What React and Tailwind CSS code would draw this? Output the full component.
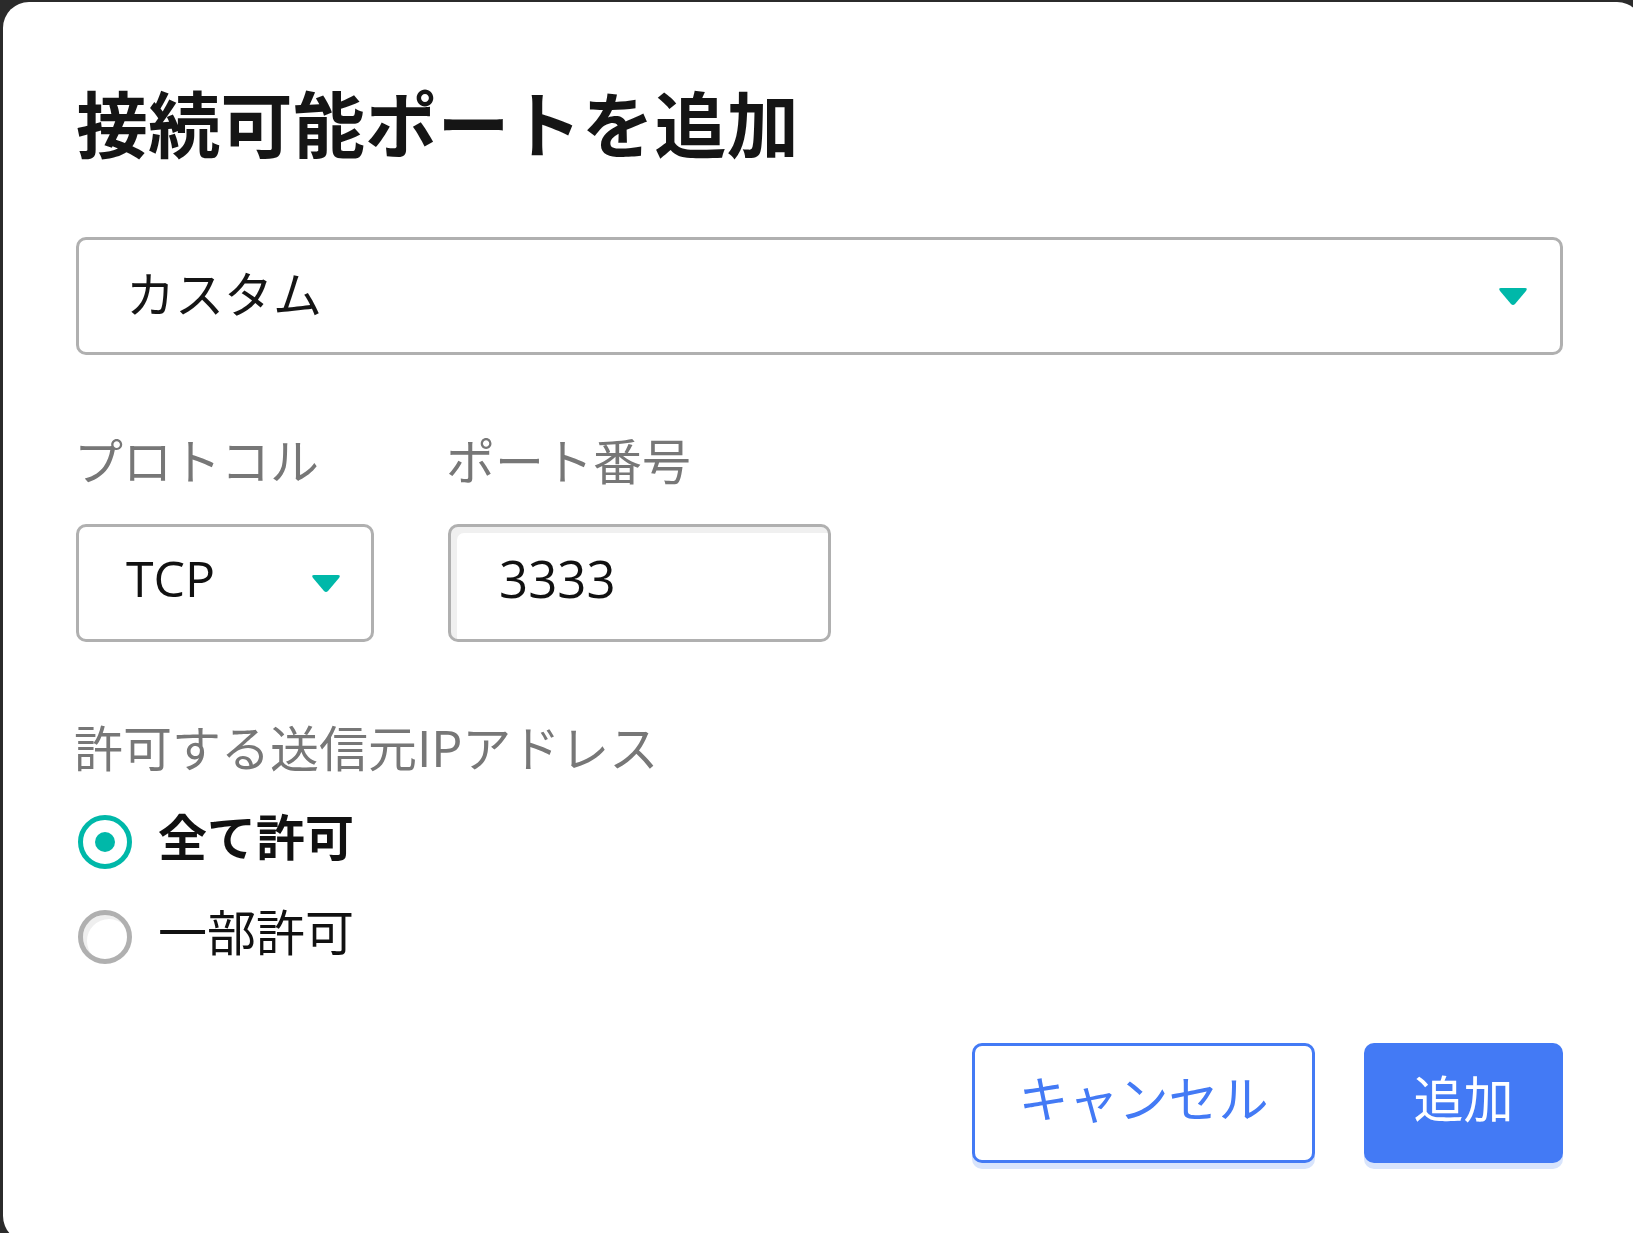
import React, { useState } from "react";

const font = { fontFamily: '"Noto Sans CJK JP", "Noto Sans", sans-serif' };
const latin = { fontFamily: '"Open Sans", "Noto Sans CJK JP", sans-serif' };

const Caret = ({ className }) => (
  <svg viewBox="0 0 30 19" className={className}>
    <path d="M3 1 H27 Q30 1 28 4 L17 17 Q15 19 13 17 L2 4 Q0 1 3 1 Z" fill="#00b8a9" />
  </svg>
);

const Radio = ({ checked, label, onClick }) => (
  <button onClick={onClick} className="flex items-center h-[95px] pl-[2px] text-left">
    {checked ? (
      <span className="w-[54px] h-[54px] rounded-full border-[5px] border-[#00b8a9] flex items-center justify-center">
        <span className="w-[20px] h-[20px] rounded-full bg-[#00b8a9]" />
      </span>
    ) : (
      <span className="w-[54px] h-[54px] rounded-full border-[5px] border-[#b0b0b0] shadow-[inset_4px_4px_0_#efefef]" />
    )}
    <span className={`ml-[26px] pb-[14px] text-[49px] leading-none text-[#111] ${checked ? "font-bold" : "font-normal"}`}>
      {label}
    </span>
  </button>
);

export default function App() {
  const [mode, setMode] = useState("all");

  return (
    <div className="h-screen w-full overflow-hidden bg-[#2b2b2b]" style={font}>
      <div className="ml-[3px] mt-[2px] w-[1640px] h-[1240px] rounded-[26px] bg-white pl-[73px] pt-[74px]">
        <div className="w-[1487px] flex flex-col">
          <h1 className="text-[72px] leading-[90px] font-bold text-[#151515] tracking-[0.3px]">
            接続可能ポートを追加
          </h1>

          <div className="mt-[71px] h-[118px] rounded-[10px] border-[3px] border-[#b0b0b0] flex items-center justify-between pl-[47px] pr-[32px]">
            <span className="pb-[10px] text-[49px] text-[#151515] leading-none">カスタム</span>
            <Caret className="w-[30px] h-[19px]" />
          </div>

          <div className="mt-[66px] flex gap-[74px]">
            <div className="flex flex-col">
              <span className="text-[49px] leading-[75px] text-[#777] -ml-[2px]">プロトコル</span>
              <div className="mt-[28px] w-[298px] h-[118px] rounded-[10px] border-[3px] border-[#b0b0b0] flex items-center justify-between pl-[47px] pr-[30px]">
                <span className="pb-[10px] text-[50px] text-[#111] leading-none" style={latin}>TCP</span>
                <Caret className="w-[30px] h-[19px]" />
              </div>
            </div>
            <div className="flex flex-col">
              <span className="text-[49px] leading-[75px] text-[#777] -ml-[2px]">ポート番号</span>
              <div className="mt-[28px] w-[383px] h-[118px] rounded-[10px] border-[3px] border-[#b0b0b0] shadow-[inset_6px_6px_0_#f0f0f0] flex items-center pl-[48px]">
                <span className="pb-[10px] text-[51px] text-[#111] leading-none" style={latin}>3333</span>
              </div>
            </div>
          </div>

          <span className="mt-[66px] text-[49px] leading-[75px] text-[#777] -ml-[2px]">許可する送信元IPアドレス</span>

          <div className="mt-[11px] flex flex-col">
            <Radio checked={mode === "all"} label="全て許可" onClick={() => setMode("all")} />
            <Radio checked={mode === "some"} label="一部許可" onClick={() => setMode("some")} />
          </div>

          <div className="mt-[59px] flex justify-end gap-[49px]">
            <button className="w-[343px] h-[120px] pb-[14px] rounded-[10px] border-[3px] border-[#437af5] bg-white text-[#437af5] text-[50px] leading-none shadow-[0_6px_0_#d8e4fc]">
              キャンセル
            </button>
            <button className="w-[199px] h-[120px] pb-[14px] rounded-[10px] bg-[#437af5] text-white text-[50px] leading-none shadow-[0_6px_0_#d8e4fc]">
              追加
            </button>
          </div>
        </div>
      </div>
    </div>
  );
}
